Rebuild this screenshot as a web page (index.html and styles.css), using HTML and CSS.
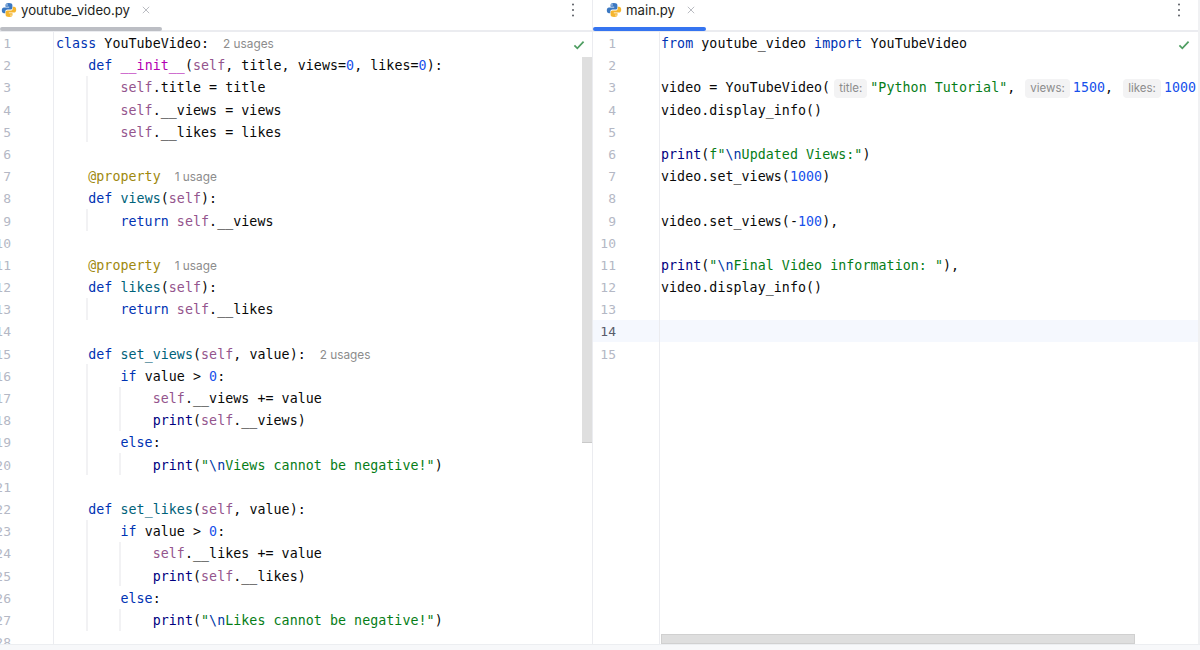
FILE: index.html
```html
<!DOCTYPE html>
<html lang="en">
<head>
  <meta charset="UTF-8" />
  <title>youtube_video.py</title>
  <link rel="stylesheet" href="styles.css">
</head>
<body>
  <svg class="defs" width="0" height="0">
    <symbol id="py" viewBox="0 0 16 16">
      <path fill="#3b78c2" d="M7.9 1C5.6 1 4.5 1.8 4.5 3.2V4.8H8.2V5.4H3C1.6 5.4 .8 6.500 .8 8.300S1.600 11.200 3 11.200H4.300V9.600C4.300 8.300 5.300 7.500 6.500 7.500H9.600C10.600 7.500 11.400 6.700 11.400 5.700V3.200C11.400 1.800 10.100 1 7.900 1ZM6 2.200A.7 .7 0 1 1 6 3.600A.7 .7 0 1 1 6 2.200Z"/>
      <path fill="#f5b52e" d="M8.100 15C10.400 15 11.500 14.200 11.500 12.800V11.200H7.800V10.600H13C14.400 10.600 15.200 9.500 15.200 7.700S14.400 4.800 13 4.800H11.700V6.400C11.700 7.700 10.700 8.500 9.500 8.500H6.400C5.400 8.500 4.600 9.300 4.600 10.300V12.800C4.600 14.200 5.900 15 8.100 15ZM10 13.800A.7 .7 0 1 1 10 12.400A.7 .7 0 1 1 10 13.800Z"/>
    </symbol>
    <symbol id="close" viewBox="0 0 10 10">
      <path d="M1 1L9 9M9 1L1 9" stroke="#a8abb2" stroke-width="1" fill="none"/>
    </symbol>
    <symbol id="check" viewBox="0 0 14 12">
      <path d="M1.500 6.500L5 10L12.500 2" stroke="#4f9e62" stroke-width="2.100" fill="none"/>
    </symbol>
    <symbol id="dots" viewBox="0 0 4 16">
      <circle cx="2" cy="2.500" r="1" fill="#5a5d63"/>
      <circle cx="2" cy="8" r="1" fill="#5a5d63"/>
      <circle cx="2" cy="13.500" r="1" fill="#5a5d63"/>
    </symbol>
  </svg>

  <div class="split">
    <section class="pane pane-left">
      <div class="tabbar">
        <div class="tab tab-left">
          <svg class="tab-icon"><use href="#py"/></svg>
          <span class="tab-name">youtube_video.py</span>
          <svg class="tab-close"><use href="#close"/></svg>
          <i class="tab-line line-grey"></i>
        </div>
        <svg class="tab-menu"><use href="#dots"/></svg>
      </div>
      <div class="editor">
        <div class="gutter" id="gutter-left">
          <b>1</b><b>2</b><b>3</b><b>4</b><b>5</b><b>6</b><b>7</b><b>8</b><b>9</b><b>10</b><b>11</b><b>12</b><b>13</b><b>14</b><b>15</b><b>16</b><b>17</b><b>18</b><b>19</b><b>20</b><b>21</b><b>22</b><b>23</b><b>24</b><b>25</b><b>26</b><b>27</b><b>28</b>
        </div>
        <div class="code">
          <div class="ln"><span class="kw">class</span> YouTubeVideo:<span class="hint">2 usages</span></div>
          <div class="ln">    <span class="kw">def</span> <span class="magic">__init__</span>(<span class="self">self</span>, title, views=<span class="num">0</span>, likes=<span class="num">0</span>):</div>
          <div class="ln">        <span class="self">self</span>.title = title</div>
          <div class="ln">        <span class="self">self</span>.__views = views</div>
          <div class="ln">        <span class="self">self</span>.__likes = likes</div>
          <div class="ln"></div>
          <div class="ln">    <span class="deco">@property</span><span class="hint">1 usage</span></div>
          <div class="ln">    <span class="kw">def</span> <span class="fn">views</span>(<span class="self">self</span>):</div>
          <div class="ln">        <span class="kw">return</span> <span class="self">self</span>.__views</div>
          <div class="ln"></div>
          <div class="ln">    <span class="deco">@property</span><span class="hint">1 usage</span></div>
          <div class="ln">    <span class="kw">def</span> <span class="fn">likes</span>(<span class="self">self</span>):</div>
          <div class="ln">        <span class="kw">return</span> <span class="self">self</span>.__likes</div>
          <div class="ln"></div>
          <div class="ln">    <span class="kw">def</span> <span class="fn">set_views</span>(<span class="self">self</span>, value):<span class="hint">2 usages</span></div>
          <div class="ln">        <span class="kw">if</span> value &gt; <span class="num">0</span>:</div>
          <div class="ln">            <span class="self">self</span>.__views += value</div>
          <div class="ln">            <span class="call">print</span>(<span class="self">self</span>.__views)</div>
          <div class="ln">        <span class="kw">else</span>:</div>
          <div class="ln">            <span class="call">print</span>(<span class="str">"<span class="esc">\n</span>Views cannot be negative!"</span>)</div>
          <div class="ln"></div>
          <div class="ln">    <span class="kw">def</span> <span class="fn">set_likes</span>(<span class="self">self</span>, value):</div>
          <div class="ln">        <span class="kw">if</span> value &gt; <span class="num">0</span>:</div>
          <div class="ln">            <span class="self">self</span>.__likes += value</div>
          <div class="ln">            <span class="call">print</span>(<span class="self">self</span>.__likes)</div>
          <div class="ln">        <span class="kw">else</span>:</div>
          <div class="ln">            <span class="call">print</span>(<span class="str">"<span class="esc">\n</span>Likes cannot be negative!"</span>)</div>
        </div>
        <i class="guide g1"></i><i class="guide g2"></i><i class="guide g3"></i><i class="guide g4"></i><i class="guide g5"></i>
        <i class="guide g6"></i><i class="guide g7"></i><i class="guide g8"></i><i class="guide g9"></i>
        <svg class="status"><use href="#check"/></svg>
        <i class="scroll-v"></i>
      </div>
    </section>

    <section class="pane pane-right">
      <div class="tabbar">
        <div class="tab tab-right">
          <svg class="tab-icon"><use href="#py"/></svg>
          <span class="tab-name">main.py</span>
          <svg class="tab-close"><use href="#close"/></svg>
          <i class="tab-line line-blue"></i>
        </div>
        <svg class="tab-menu"><use href="#dots"/></svg>
      </div>
      <div class="editor">
        <i class="caret-row"></i>
        <div class="gutter" id="gutter-right">
          <b>1</b><b>2</b><b>3</b><b>4</b><b>5</b><b>6</b><b>7</b><b>8</b><b>9</b><b>10</b><b>11</b><b>12</b><b>13</b><b class="current">14</b><b>15</b>
        </div>
        <div class="code">
          <div class="ln"><span class="kw">from</span> youtube_video <span class="kw">import</span> YouTubeVideo</div>
          <div class="ln"></div>
          <div class="ln">video = YouTubeVideo(<span class="param param-first">title:</span><span class="str">"Python Tutorial"</span>,<span class="param">views:</span><span class="num">1500</span>,<span class="param">likes:</span><span class="num">1000</span></div>
          <div class="ln">video.display_info()</div>
          <div class="ln"></div>
          <div class="ln"><span class="call">print</span>(<span class="str">f"<span class="esc">\n</span>Updated Views:"</span>)</div>
          <div class="ln">video.set_views(<span class="num">1000</span>)</div>
          <div class="ln"></div>
          <div class="ln">video.set_views(-<span class="num">100</span>),</div>
          <div class="ln"></div>
          <div class="ln"><span class="call">print</span>(<span class="str">"<span class="esc">\n</span>Final Video information: "</span>),</div>
          <div class="ln">video.display_info()</div>
        </div>
        <svg class="status status-right"><use href="#check"/></svg>
        <i class="scroll-h"></i>
      </div>
    </section>
  </div>
</body>
</html>
```

FILE: styles.css
```css
* {
  box-sizing: border-box;
}

html,
body {
  height: 100%;
}

body {
  margin: 0;
  background: #f7f8fa;
  color: #1e1f22;
  overflow: hidden;
}

.defs {
  position: absolute;
}

.split {
  display: flex;
  height: 645px;
  background: #fff;
  border-bottom: 1px solid #eceef1;
}

.pane {
  display: flex;
  flex-direction: column;
  min-width: 0;
}

.pane-left {
  width: 593px;
  border-right: 1px solid #ebecf0;
}

.pane-right {
  flex: 1;
  border-right: 2px solid #f0f1f3;
}

/* tabs */
.tabbar {
  display: flex;
  align-items: flex-start;
  justify-content: space-between;
  height: 32px;
  flex: none;
  border-bottom: 2px solid #ebecf0;
}

.tab {
  position: relative;
  display: flex;
  align-items: center;
  height: 20px;
  font: 13.2px Inter, "Liberation Sans", sans-serif;
}

.tab-left {
  width: 162px;
  padding-left: 1px;
}

.tab-right {
  width: 113px;
  padding-left: 13px;
}

.tab-icon {
  width: 16px;
  height: 16px;
  flex: none;
}

.tab-name {
  margin-left: 4px;
}

.tab-close {
  width: 8px;
  height: 8px;
  margin-left: 12px;
}

.tab-line {
  position: absolute;
  left: 0;
  right: 0;
  top: 27px;
  height: 4px;
  border-radius: 2px;
}

.line-grey {
  background: #bcbec4;
}

.line-blue {
  background: #3574f0;
}

.tab-menu {
  width: 4px;
  height: 16px;
  margin: 2px 17px 0 0;
}

/* editor */
.editor {
  position: relative;
  display: flex;
  flex: 1;
  min-height: 0;
  overflow: hidden;
}

.gutter {
  position: relative;
  flex: none;
  display: flex;
  flex-direction: column;
  padding-top: 1px;
  border-right: 1px solid #ebecf0;
  font: 13px/22.19px "DejaVu Sans Mono", monospace;
  color: #b4b8c5;
  overflow: hidden;
}

.gutter b {
  display: flex;
  justify-content: flex-end;
  flex: none;
  height: 22.19px;
  font-weight: 400;
  white-space: nowrap;
}

#gutter-left {
  width: 54px;
}

#gutter-left b {
  padding-right: 42px;
}

#gutter-right {
  width: 67px;
}

#gutter-right b {
  padding-right: 43px;
}

.gutter .current {
  color: #5a5d6b;
}

.code {
  position: relative;
  padding: 1px 0 0 2px;
  min-width: 0;
  font: 13.3px/22.19px "DejaVu Sans Mono", monospace;
  letter-spacing: 0.05px;
  color: #080808;
}

.pane-right .code {
  padding-left: 1px;
}

.ln {
  height: 22.19px;
  white-space: pre;
}

.kw {
  color: #0033b3;
}

.magic {
  color: #b200b2;
}

.fn {
  color: #00627a;
}

.self {
  color: #94558d;
}

.num {
  color: #1750eb;
}

.deco {
  color: #9e880d;
}

.str {
  color: #067d17;
}

.esc {
  color: #0037a6;
}

.call {
  color: #000080;
}

.hint {
  margin-left: 14px;
  font: 11.8px Inter, "Liberation Sans", sans-serif;
  letter-spacing: 0;
  color: #8c8c8c;
}

.param {
  display: inline-block;
  height: 19px;
  margin: 0 3px 0 10px;
  padding: 0 5px;
  border-radius: 4px;
  background: #f3f3f4;
  font: 11.5px/19px Inter, "Liberation Sans", sans-serif;
  letter-spacing: 0;
  color: #8c8c8c;
}

.param-first {
  margin-left: 4px;
}

/* indent guides, they sit over the code column */
.guide {
  position: absolute;
  width: 2px;
  background: #f2f2f4;
}

.g1 { left: 86px; top: 44px; height: 66px; }
.g2 { left: 86px; top: 177px; height: 22px; }
.g3 { left: 86px; top: 266px; height: 22px; }
.g4 { left: 86px; top: 332px; height: 111px; }
.g5 { left: 86px; top: 488px; height: 111px; }
.g6 { left: 119px; top: 355px; height: 44px; }
.g7 { left: 119px; top: 421px; height: 22px; }
.g8 { left: 119px; top: 510px; height: 44px; }
.g9 { left: 119px; top: 577px; height: 22px; }

.status {
  position: absolute;
  top: 8px;
  right: 7px;
  width: 12px;
  height: 10px;
}

.status-right {
  right: 8px;
}

.scroll-v {
  position: absolute;
  top: 25px;
  right: 0;
  width: 10px;
  height: 386px;
  background: #dfdfdf;
  border-bottom: 1px solid #c9c9c9;
}

.scroll-h {
  position: absolute;
  left: 68px;
  right: 63px;
  bottom: 0;
  height: 10px;
  background: #dedede;
  border: 1px solid #d0d0d0;
}

.caret-row {
  position: absolute;
  left: 0;
  right: 0;
  top: 288px;
  height: 22px;
  background: #f5f8fe;
}
```
